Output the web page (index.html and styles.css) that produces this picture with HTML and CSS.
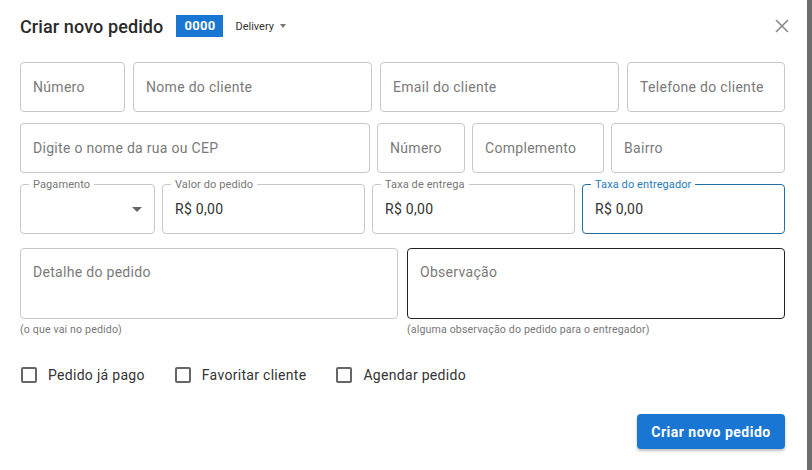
FILE: index.html
```html
<!DOCTYPE html>
<html lang="pt-BR">
<head>
    <meta charset="UTF-8">
    <title>Criar novo pedido</title>
    <link rel="stylesheet" href="styles.css">
</head>
<body>

    <!-- Dialog -->
    <div class="dialog">
        <div class="dialog-header">
            <h2 class="dialog-title">Criar novo pedido</h2>
            <span class="order-badge">0000</span>
            <span class="order-type">Delivery <span class="caret-small"></span></span>
            <button class="close-btn" aria-label="Fechar">
                <svg width="14" height="14" viewBox="0 0 14 14">
                    <path d="M1 1 L13 13 M13 1 L1 13" stroke="#8a8a8a" stroke-width="1.6" fill="none"/>
                </svg>
            </button>
        </div>

        <!-- Cliente -->
        <div class="row row-client">
            <input class="field" type="text" placeholder="Número">
            <input class="field" type="text" placeholder="Nome do cliente">
            <input class="field" type="text" placeholder="Email do cliente">
            <input class="field" type="text" placeholder="Telefone do cliente">
        </div>

        <!-- Endereço -->
        <div class="row row-address">
            <input class="field" type="text" placeholder="Digite o nome da rua ou CEP">
            <input class="field" type="text" placeholder="Número">
            <input class="field" type="text" placeholder="Complemento">
            <input class="field" type="text" placeholder="Bairro">
        </div>

        <!-- Valores -->
        <div class="row row-values">
            <div class="outlined">
                <span class="outlined-label">Pagamento</span>
                <div class="select-box"><span class="caret"></span></div>
            </div>
            <div class="outlined">
                <span class="outlined-label">Valor do pedido</span>
                <input class="outlined-input" type="text" value="R$ 0,00">
            </div>
            <div class="outlined">
                <span class="outlined-label">Taxa de entrega</span>
                <input class="outlined-input" type="text" value="R$ 0,00">
            </div>
            <div class="outlined focused">
                <span class="outlined-label">Taxa do entregador</span>
                <input class="outlined-input" type="text" value="R$ 0,00">
            </div>
        </div>

        <!-- Detalhes -->
        <div class="row row-notes">
            <div>
                <textarea class="note" placeholder="Detalhe do pedido"></textarea>
                <p class="helper">(o que vai no pedido)</p>
            </div>
            <div>
                <textarea class="note hovered" placeholder="Observação"></textarea>
                <p class="helper">(alguma observação do pedido para o entregador)</p>
            </div>
        </div>

        <div class="checks">
            <label class="check"><span class="box"></span>Pedido já pago</label>
            <label class="check"><span class="box"></span>Favoritar cliente</label>
            <label class="check"><span class="box"></span>Agendar pedido</label>
        </div>

        <div class="actions">
            <button class="submit-btn">Criar novo pedido</button>
        </div>
    </div>

</body>
</html>
```

FILE: styles.css
```css
/* Basis */
body {
    margin: 0;
    padding: 0;
    background: #6d6d6d;
    font-family: Roboto, "Liberation Sans", sans-serif;
    color: #333;
}

.dialog {
    width: 807px;
    height: 470px;
    box-sizing: border-box;
    padding: 14px 22px 0 20px;
    background: #fff;
}

/* Kopfzeile */
.dialog-header {
    display: flex;
    align-items: center;
    height: 24px;
}

.dialog-title {
    margin: 0;
    font-size: 18px;
    font-weight: 500;
    letter-spacing: 0.1px;
    color: #2a2a2a;
}

.order-badge {
    margin-left: 13px;
    padding: 0 8px;
    height: 22px;
    line-height: 22px;
    background: #1976d2;
    color: #fff;
    font-size: 13px;
    font-weight: 700;
    letter-spacing: 0.3px;
}

.order-type {
    margin-left: 12px;
    font-size: 11px;
    color: #333;
    display: flex;
    align-items: center;
}

.caret-small {
    display: inline-block;
    margin-left: 6px;
    border-left: 3.5px solid transparent;
    border-right: 3.5px solid transparent;
    border-top: 4px solid #777;
}

.close-btn {
    margin-left: auto;
    margin-right: -4px;
    padding: 0;
    border: none;
    background: none;
    cursor: pointer;
    display: flex;
}

/* Zeilen */
.row {
    display: grid;
    column-gap: 8px;
}

.row-client {
    margin-top: 24px;
    grid-template-columns: 105px 239px 239px 1fr;
}

.row-address {
    margin-top: 11px;
    column-gap: 7px;
    grid-template-columns: 350px 88px 132px 1fr;
}

.row-values {
    margin-top: 11px;
    column-gap: 7px;
    grid-template-columns: 135px 1fr 1fr 1fr;
}

.row-notes {
    margin-top: 14px;
    column-gap: 9px;
    grid-template-columns: 1fr 1fr;
}

.field {
    width: 100%;
    height: 50px;
    box-sizing: border-box;
    padding: 0 12px;
    border: 1px solid #c8c8c8;
    border-radius: 4px;
    font-family: inherit;
    font-size: 14px;
    letter-spacing: 0.3px;
    color: #333;
    outline: none;
}

.field::placeholder,
.note::placeholder {
    color: #7a7a7a;
    opacity: 1;
}

/* Umrandete Felder mit Label */
.outlined {
    position: relative;
    height: 50px;
    box-sizing: border-box;
    border: 1px solid #c8c8c8;
    border-radius: 4px;
}

.outlined.focused {
    border-color: #236ea6;
}

.outlined-label {
    position: absolute;
    top: -7px;
    left: 8px;
    padding: 0 4px;
    background: #fff;
    font-size: 11px;
    line-height: 13px;
    letter-spacing: 0.1px;
    color: #777;
}

.focused .outlined-label {
    color: #2a7bbd;
}

.outlined-input {
    width: 100%;
    height: 48px;
    box-sizing: border-box;
    padding: 0 12px;
    border: none;
    background: none;
    font-family: inherit;
    font-size: 14px;
    letter-spacing: 0.3px;
    color: #333;
    outline: none;
}

.select-box {
    height: 48px;
    display: flex;
    align-items: center;
    justify-content: flex-end;
    padding-right: 12px;
}

.caret {
    border-left: 5px solid transparent;
    border-right: 5px solid transparent;
    border-top: 5px solid #666;
}

/* Textfelder */
.note {
    display: block;
    width: 100%;
    height: 71px;
    box-sizing: border-box;
    padding: 15px 12px;
    border: 1px solid #c8c8c8;
    border-radius: 4px;
    font-family: inherit;
    font-size: 14px;
    line-height: 17px;
    letter-spacing: 0.3px;
    resize: none;
    outline: none;
}

.note.hovered {
    border-color: #222;
}

.helper {
    margin: 4px 0 0;
    font-size: 10.6px;
    line-height: 13px;
    letter-spacing: 0.15px;
    color: #777;
}

/* Checkboxen */
.checks {
    margin-top: 27px;
    display: flex;
    gap: 29px;
    height: 24px;
    align-items: center;
}

.check {
    display: flex;
    align-items: center;
    font-size: 14px;
    letter-spacing: 0.3px;
    color: #333;
    cursor: pointer;
}

.box {
    width: 12px;
    height: 12px;
    margin-left: 1px;
    margin-right: 11px;
    border: 2px solid #666;
    border-radius: 2px;
}

/* Aktion */
.actions {
    margin-top: 27px;
    display: flex;
    justify-content: flex-end;
}

.submit-btn {
    width: 148px;
    height: 35px;
    border: none;
    border-radius: 4px;
    background: #1976d2;
    color: #fff;
    font-family: inherit;
    font-size: 14px;
    font-weight: 700;
    letter-spacing: 0.5px;
    cursor: pointer;
    box-shadow: 0 2px 3px rgba(0, 0, 0, 0.25);
}
```
